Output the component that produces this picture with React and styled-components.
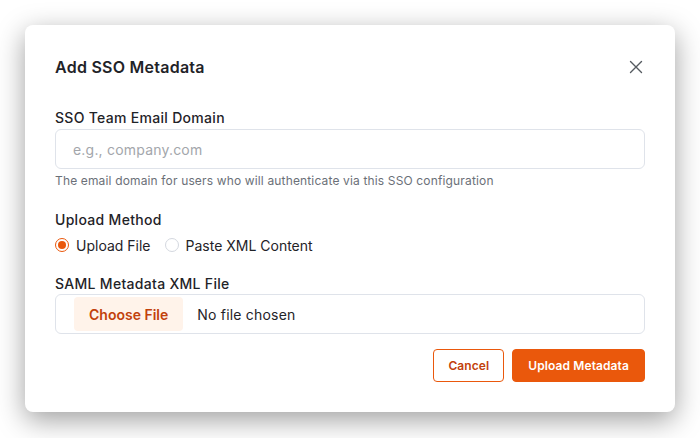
import React, { useState } from 'react'
import styled, { createGlobalStyle } from 'styled-components'

const Global = createGlobalStyle`
  body {
    margin: 0;
    background: #ffffff;
    font-family: Inter, "Noto Sans", sans-serif;
    color: #1f2328;
  }
`

const Page = styled.div`
  padding: 25px;
  width: 700px;
  height: 438px;
  box-sizing: border-box;
`

const Modal = styled.div`
  width: 650px;
  height: 387px;
  box-sizing: border-box;
  background: #fff;
  border-radius: 8px;
  box-shadow: 0 8px 28px rgba(0, 0, 0, 0.38);
  padding: 30px;
  display: flex;
  flex-direction: column;
`

const Header = styled.div`
  display: flex;
  align-items: center;
  justify-content: space-between;
  height: 24px;
  margin-bottom: 29px;
`

const Title = styled.h2`
  margin: 0;
  font-size: 16px;
  font-weight: 600;
  color: #1f2328;
  letter-spacing: 0.25px;
`

const CloseButton = styled.button`
  border: none;
  background: none;
  padding: 0;
  width: 20px;
  height: 20px;
  display: flex;
  align-items: center;
  justify-content: center;
  margin-right: -1px;
  cursor: pointer;
`

const Label = styled.div`
  font-size: 14px;
  line-height: 19px;
  font-weight: 500;
  letter-spacing: 0.3px;
  color: #1f2328;
  margin-top: ${p => p.$top || 0}px;
  margin-bottom: ${p => p.$bottom || 2}px;
`

const Input = styled.input`
  height: 40px;
  box-sizing: border-box;
  border: 1px solid #dfe3ea;
  border-radius: 6px;
  padding: 0 17px;
  font-family: inherit;
  font-size: 14px;
  letter-spacing: 0.2px;
  color: #1f2328;
  outline: none;
  &::placeholder {
    color: #a3a6ab;
  }
`

const Help = styled.div`
  font-size: 12px;
  line-height: 16px;
  letter-spacing: 0.15px;
  color: #6b7078;
  margin-top: 4px;
`

const RadioRow = styled.div`
  display: flex;
  align-items: center;
  gap: 14px;
  height: 20px;
  margin-top: 4px;
`

const RadioOption = styled.label`
  display: flex;
  align-items: center;
  gap: 7px;
  font-size: 14px;
  color: #1f2328;
  cursor: pointer;
`

const RadioDot = styled.span`
  width: 14px;
  height: 14px;
  box-sizing: border-box;
  border-radius: 50%;
  border: 1px solid ${p => (p.$checked ? '#ea580c' : '#d4d8df')};
  display: flex;
  align-items: center;
  justify-content: center;
  &::after {
    content: '';
    width: 8px;
    height: 8px;
    border-radius: 50%;
    background: ${p => (p.$checked ? '#ea580c' : 'transparent')};
  }
`

const FileBox = styled.div`
  height: 40px;
  box-sizing: border-box;
  border: 1px solid #dfe3ea;
  border-radius: 6px;
  display: flex;
  align-items: center;
  padding-left: 18px;
  gap: 14px;
`

const ChooseButton = styled.span`
  height: 34px;
  padding: 0 15px;
  display: flex;
  align-items: center;
  background: #fff3ea;
  border-radius: 4px;
  font-size: 14px;
  font-weight: 600;
  color: #c2410c;
`

const FileName = styled.span`
  font-size: 14px;
  letter-spacing: 0.2px;
  color: #1f2328;
`

const Footer = styled.div`
  display: flex;
  justify-content: flex-end;
  gap: 8px;
  margin-top: 15px;
`

const Button = styled.button`
  height: 33px;
  box-sizing: border-box;
  border-radius: 4px;
  font-family: inherit;
  font-size: 12px;
  font-weight: 600;
  letter-spacing: 0.1px;
  padding: 0 ${p => (p.$primary ? 15 : 14)}px;
  border: 1px solid #ea580c;
  background: ${p => (p.$primary ? '#ea580c' : '#fff')};
  color: ${p => (p.$primary ? '#fff' : '#c2410c')};
  cursor: pointer;
`

const Field = styled.div`
  display: flex;
  flex-direction: column;
`

export default function App() {
  const [method, setMethod] = useState('file')
  return (
    <Page>
      <Global />
      <Modal>
        <Header>
          <Title>Add SSO Metadata</Title>
          <CloseButton aria-label="Close">
            <svg width="16" height="16" viewBox="0 0 16 16" fill="none" stroke="#555a60" strokeWidth="1.4" strokeLinecap="round">
              <path d="M2.5 2.5l11 11M13.5 2.5l-11 11" />
            </svg>
          </CloseButton>
        </Header>

        <Field>
          <Label>SSO Team Email Domain</Label>
          <Input placeholder="e.g., company.com" />
          <Help>The email domain for users who will authenticate via this SSO configuration</Help>
        </Field>

        <Field>
          <Label $top={21} $bottom={0}>Upload Method</Label>
          <RadioRow>
            <RadioOption onClick={() => setMethod('file')}>
              <RadioDot $checked={method === 'file'} />
              Upload File
            </RadioOption>
            <RadioOption onClick={() => setMethod('xml')}>
              <RadioDot $checked={method === 'xml'} />
              Paste XML Content
            </RadioOption>
          </RadioRow>
        </Field>

        <Field>
          <Label $top={19} $bottom={1}>SAML Metadata XML File</Label>
          <FileBox>
            <ChooseButton>Choose File</ChooseButton>
            <FileName>No file chosen</FileName>
          </FileBox>
        </Field>

        <Footer>
          <Button>Cancel</Button>
          <Button $primary>Upload Metadata</Button>
        </Footer>
      </Modal>
    </Page>
  )
}
